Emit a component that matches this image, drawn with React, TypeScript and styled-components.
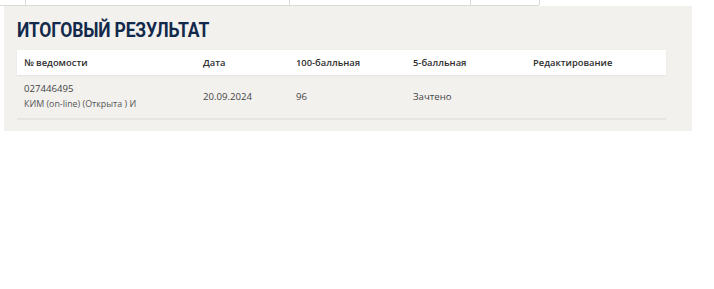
import React from "react";
import styled, { createGlobalStyle } from "styled-components";

const Global = createGlobalStyle`
  html, body { margin: 0; padding: 0; background: #ffffff; }
  body { font-family: "Open Sans", "Noto Sans", sans-serif; color: #333; }
`;

const Tabs = styled.div`
  display: flex;
  width: 539px;
  height: 5px;
  border-bottom: 1px solid #dcdad6;
`;

const Tab = styled.div<{ $w: number }>`
  width: ${(p) => p.$w}px;
  flex: none;
  border-right: 1px solid #dcdad6;
  box-sizing: border-box;
`;

const Panel = styled.section`
  width: 688px;
  margin-left: 4px;
  box-sizing: border-box;
  background: #f2f1ee;
  padding: 12px 26px 11px 13px;
`;

/* condensed heading: Roboto squeezed horizontally */
const Title = styled.h2`
  margin: 0 0 7px 0;
  font-family: Roboto, "Noto Sans", sans-serif;
  font-weight: 700;
  font-size: 19.5px;
  line-height: 25px;
  letter-spacing: -0.2px;
  color: #13294b;
  transform: scaleX(0.9);
  transform-origin: left center;
  white-space: nowrap;
`;

const Table = styled.div`
  display: flex;
  flex-direction: column;
`;

const Row = styled.div<{ $head?: boolean }>`
  display: grid;
  grid-template-columns: 179px 93px 117px 120px 1fr;
  align-items: center;
  background: ${(p) => (p.$head ? "#ffffff" : "transparent")};
  height: ${(p) => (p.$head ? 25 : 45)}px;
  box-sizing: border-box;
  box-shadow: ${(p) => (p.$head ? "0 1px 2px rgba(0,0,0,0.06)" : "none")};
  border-bottom: ${(p) => (p.$head ? "none" : "2px solid #e7e5e1")};
`;

const Cell = styled.div<{ $head?: boolean }>`
  padding-left: 7px;
  font-size: ${(p) => (p.$head ? 9.4 : 9.6)}px;
  font-weight: ${(p) => (p.$head ? 600 : 400)};
  color: ${(p) => (p.$head ? "#2e2e2e" : "#444")};
  line-height: 14px;
`;

const Sub = styled.div`
  font-size: 8.9px;
  color: #555;
  line-height: 15px;
`;

const heads = ["№ ведомости", "Дата", "100-балльная", "5-балльная", "Редактирование"];

export default function App() {
  return (
    <>
      <Global />
      <Tabs>
        <Tab $w={26} />
        <Tab $w={264} />
        <Tab $w={181} />
        <Tab $w={69} />
      </Tabs>
      <Panel>
        <Title>ИТОГОВЫЙ РЕЗУЛЬТАТ</Title>
        <Table>
          <Row $head>
            {heads.map((h) => (
              <Cell $head key={h}>
                {h}
              </Cell>
            ))}
          </Row>
          <Row>
            <Cell>
              027446495
              <Sub>КИМ (on-line) (Открыта ) И</Sub>
            </Cell>
            <Cell>20.09.2024</Cell>
            <Cell>96</Cell>
            <Cell>Зачтено</Cell>
            <Cell />
          </Row>
        </Table>
      </Panel>
    </>
  );
}
